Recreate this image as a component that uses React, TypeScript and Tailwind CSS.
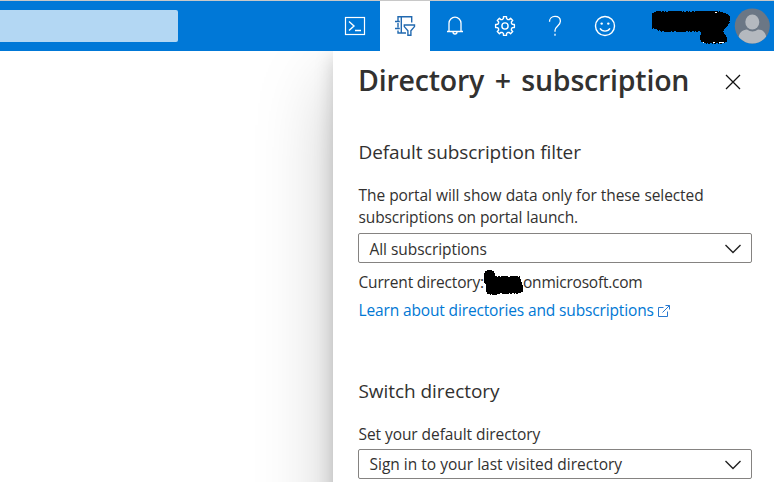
import React from 'react';

function IconCell({ active, children }: { active?: boolean; children: React.ReactNode }) {
  return (
    <div className={`flex h-[50px] w-[50px] items-center justify-center ${active ? 'bg-white text-[#2169b0]' : 'text-white'}`}>
      <svg width="22" height="22" viewBox="0 0 22 22" fill="none" stroke="currentColor" strokeWidth="1.2">
        {children}
      </svg>
    </div>
  );
}

const gearPoints = Array.from({ length: 8 }, (_, i) => {
  const at = (deg: number, r: number) => {
    const a = ((i * 45 + deg) * Math.PI) / 180;
    return `${(11 + r * Math.sin(a)).toFixed(2)},${(11 - r * Math.cos(a)).toFixed(2)}`;
  };
  return [at(-9, 9.5), at(9, 9.5), at(12, 7.6), at(22.5, 7), at(33, 7.6)].join(' ');
}).join(' ');

function Header() {
  return (
    <header className="relative z-10 flex h-[51px] shrink-0 items-center border-t border-[#c8c8c8] bg-[#0078d7]">
      <div className="mb-px h-8 w-[178px] rounded-r-[2px] bg-[#b3d7f3]" />
      <nav className="ml-[152px] flex">
        <IconCell>
          <rect x="1.5" y="2.5" width="19" height="17" />
          <path d="M5 6.5l5 4.5-5 4.5M11 15.5h6" strokeWidth="1.4" />
        </IconCell>
        <IconCell active>
          <path d="M17.7 7.5V1.700H4v4M4 8v4.500M4 15.500v2.500h8M7.300 2v16M1 6.500h4.800M1 13.500h4.800" strokeWidth="1.4" />
          <path d="M10.300 10h10.200v1.600l-3.600 4.200v4.500h-3v-4.500l-3.600-4.200z" strokeWidth="1.4" />
        </IconCell>
        <IconCell>
          <path d="M3 16.5h16M5 16.5V8.2a6 6 0 0 1 12 0v8.3M9 17a2 2 0 0 0 4 0" strokeWidth="1.3" />
        </IconCell>
        <IconCell>
          <polygon points={gearPoints} strokeLinejoin="round" strokeWidth="1.4" />
          <circle cx="11" cy="11" r="3.1" strokeWidth="1.4" />
        </IconCell>
        <IconCell>
          <path d="M5.5 6.7C5.5 3.5 7.8 1.4 11 1.4s5.4 2 5.4 4.900c0 4.300-5.400 5-5.400 9.200v1.200M11 18.800v2" strokeWidth="1.3" />
        </IconCell>
        <IconCell>
          <circle cx="11" cy="11" r="9.5" strokeWidth="1.4" />
          <path d="M6 13.4c2 3.600 8 3.600 10 0" strokeWidth="1.4" />
          <circle cx="7.7" cy="8.6" r="1.2" fill="currentColor" stroke="none" />
          <circle cx="14.3" cy="8.6" r="1.2" fill="currentColor" stroke="none" />
        </IconCell>
      </nav>
      <svg className="ml-[22px]" width="80" height="36" viewBox="652 8 80 36" shapeRendering="crispEdges">
        <path d="M656 12l3-1 4 1 12-1 12 1 15-1 10 0 9 1 4 1 3 2 2 2 0 2-1 4-2 3-3 3-1 2 1 2 2 4 1 2-1 3-3 1-6 0-5 0-7 0-4-2-1-3 1-4 1-2-2-1-10 0-10 1-8-1-4 1-7-1-5-2-5-1-1-4 0-3-1-3 1-3z" fill="#000" stroke="#000" strokeDasharray="2 1 1 2" />
        <path d="M715 12.500h2M703 42h1M713 42.500h2M719 42.500h5" stroke="#fff" strokeWidth="1" />
      </svg>
      <svg className="ml-[2px]" width="36" height="36" viewBox="0 0 36 36">
        <clipPath id="avatar"><circle cx="18.300" cy="18" r="17.500" /></clipPath>
        <circle cx="18.300" cy="18" r="17.500" fill="#6b7785" />
        <g clipPath="url(#avatar)" fill="#b4b9bf">
          <ellipse cx="18.300" cy="14" rx="7" ry="7.600" />
          <path d="M4.500 36V31c0-6 4-9.500 8.500-9.500 3.500 2.500 7.500 2.500 11 0 5 0 8.500 3.500 8.500 9.500v5z" />
        </g>
      </svg>
    </header>
  );
}

function Dropdown({ value }: { value: React.ReactNode }) {
  return (
    <div className="flex h-[30px] w-[394px] items-center justify-between rounded-[2px] border border-[#858381] pr-2.5 pl-[10.5px]">
      {value}
      <svg className="mt-px" width="16" height="10" viewBox="0 0 16 10" fill="none" stroke="#222" strokeWidth="1.4">
        <path d="M.500 1L8 8.500 15.500 1" />
      </svg>
    </div>
  );
}

export default function App() {
  return (
    <div className="flex h-[482px] w-[774px] flex-col overflow-hidden bg-white font-['Open_Sans','Noto_Sans',sans-serif] text-[15.5px] text-[#323130]">
      <Header />
      <main className="flex flex-1 justify-end">
        <aside className="h-[900px] w-[441px] bg-white pl-[25px] shadow-[0_32px_72px_rgba(0,0,0,0.22),0_6px_18px_rgba(0,0,0,0.18)]">
          <div className="flex h-[58px] items-center justify-between pr-[33px]">
            <h1 className="whitespace-nowrap text-[28.5px] leading-[56px] font-semibold tracking-[-0.21px] [word-spacing:3.4px]">Directory + subscription</h1>
            <svg className="mt-[3px]" width="16" height="16" viewBox="0 0 16 16" stroke="#111" strokeWidth="1.3">
              <path d="M1 1l14 14M15 1L1 15" />
            </svg>
          </div>
          <h2 className="mt-[30px] h-[26px] whitespace-nowrap pl-[0.5px] text-[19px] leading-[26px] tracking-[-0.1px]">Default subscription filter</h2>
          <p className="mt-[19px] whitespace-nowrap pl-[0.5px] leading-[22px]">
            <span className="tracking-[-0.08px] [word-spacing:0.2px]">The portal will show data only for these selected</span>
            <br />
            <span className="tracking-[-0.12px]">subscriptions on portal launch.</span>
          </p>
          <div className="mt-[5px]">
            <Dropdown value={<span className="pt-[3px] tracking-[-0.05px]">All subscriptions</span>} />
          </div>
          <p className="mt-[8px] flex h-[22px] items-center whitespace-nowrap pl-[0.5px] leading-[22px]">
            <span className="w-[125.500px] tracking-[-0.17px]">Current directory:</span>
            <svg className="shrink-0" width="39" height="28" viewBox="484 268 39 28" shapeRendering="crispEdges">
              <path d="M485 272l2-2 4 0 3 2 1 4 3 1 6-1 5 1 5-1 6 1 1 4 1 4 1 3-1 4-4 1-7 0-5 1-6-1-5 2-7-1-2-3 0-6-2-5-1-2z" fill="#000" stroke="#000" strokeDasharray="2 1 1 2" />
            </svg>
            <span className="tracking-[-0.22px]">onmicrosoft.com</span>
          </p>
          <p className="mt-[6px] flex h-[22px] items-center whitespace-nowrap pl-[0.5px] leading-[22px] text-[#0078d4]">
            <span className="tracking-[-0.14px]">Learn about directories and subscriptions</span>
            <svg className="mt-0.5 ml-1" width="12" height="12" viewBox="0 0 12 12" fill="none" stroke="#2879d0">
              <path d="M5.500 2.500h-5v9h9v-5M4.500 7.500l7-7M7.500.500h4v4" />
            </svg>
          </p>
          <h2 className="mt-[57px] h-[26px] whitespace-nowrap pl-[0.5px] text-[19px] leading-[26px] tracking-[-0.05px]">Switch directory</h2>
          <p className="mt-[19px] h-[22px] whitespace-nowrap pl-[0.5px] leading-[22px] tracking-[-0.07px]"><span>Set your default directory</span></p>
          <div className="mt-[4px]">
            <Dropdown value={<span className="pt-[2px]">Sign in to your last visited directory</span>} />
          </div>
        </aside>
      </main>
    </div>
  );
}
